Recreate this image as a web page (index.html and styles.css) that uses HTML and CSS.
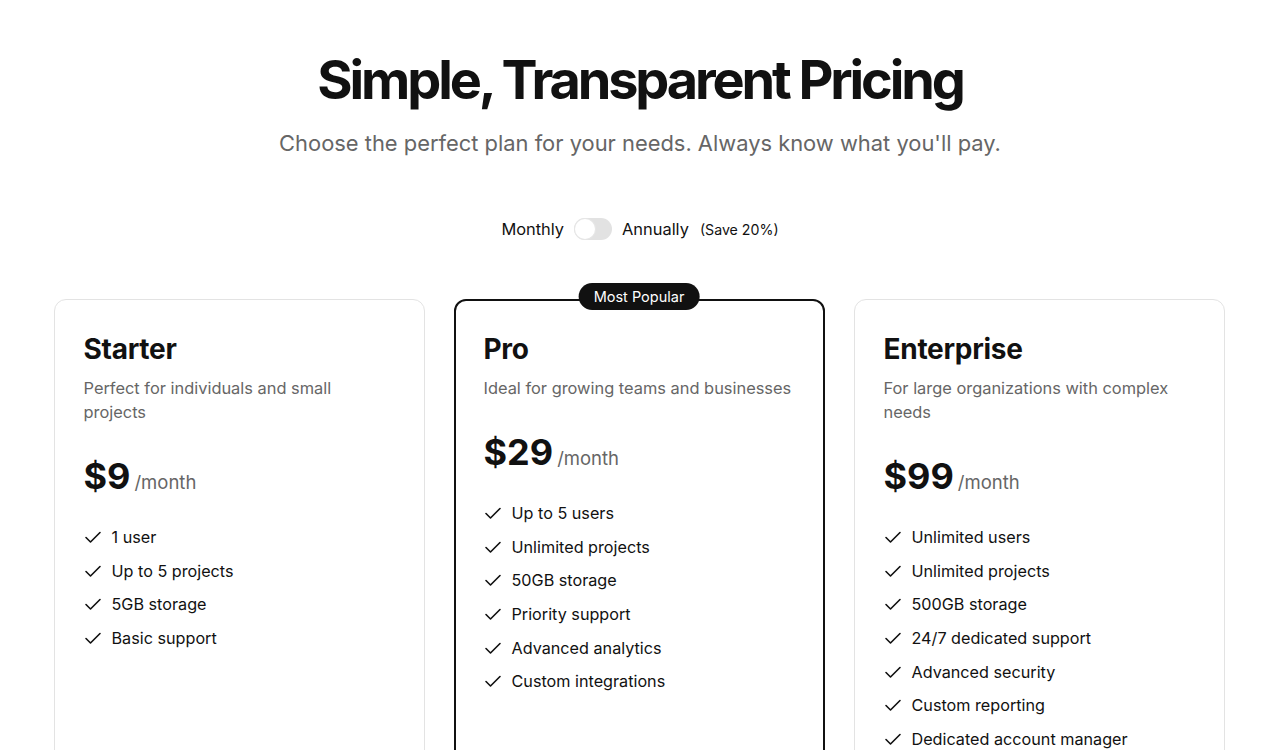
FILE: index.html
```html
<!DOCTYPE html>
<html lang="en">
<head>
    <meta charset="UTF-8">
    <meta name="viewport" content="width=device-width, initial-scale=1.0">
    <title>Pricing</title>
    <link rel="stylesheet" href="styles.css">
</head>
<body>

    <!-- Header -->
    <div class="hero">
        <h1>Simple, Transparent Pricing</h1>
        <p>Choose the perfect plan for your needs. Always know what you'll pay.</p>
    </div>

    <!-- Billing toggle -->
    <div class="billing">
        <span>Monthly</span>
        <span class="switch"><span class="knob"></span></span>
        <span>Annually</span>
        <span class="save">(Save 20%)</span>
    </div>

    <!-- Plans -->
    <div class="plans">
        <div class="plan">
            <h2>Starter</h2>
            <p class="desc">Perfect for individuals and small projects</p>
            <div class="price"><strong>$9</strong> <span>/month</span></div>
            <ul class="features">
                <li><svg viewBox="0 0 18 18"><path d="M2 9.5l4.5 4.5L16 4.5"/></svg>1 user</li>
                <li><svg viewBox="0 0 18 18"><path d="M2 9.5l4.5 4.5L16 4.5"/></svg>Up to 5 projects</li>
                <li><svg viewBox="0 0 18 18"><path d="M2 9.5l4.5 4.5L16 4.5"/></svg>5GB storage</li>
                <li><svg viewBox="0 0 18 18"><path d="M2 9.5l4.5 4.5L16 4.5"/></svg>Basic support</li>
            </ul>
        </div>

        <div class="plan popular">
            <span class="badge">Most Popular</span>
            <h2>Pro</h2>
            <p class="desc">Ideal for growing teams and businesses</p>
            <div class="price"><strong>$29</strong> <span>/month</span></div>
            <ul class="features">
                <li><svg viewBox="0 0 18 18"><path d="M2 9.5l4.5 4.5L16 4.5"/></svg>Up to 5 users</li>
                <li><svg viewBox="0 0 18 18"><path d="M2 9.5l4.5 4.5L16 4.5"/></svg>Unlimited projects</li>
                <li><svg viewBox="0 0 18 18"><path d="M2 9.5l4.5 4.5L16 4.5"/></svg>50GB storage</li>
                <li><svg viewBox="0 0 18 18"><path d="M2 9.5l4.5 4.5L16 4.5"/></svg>Priority support</li>
                <li><svg viewBox="0 0 18 18"><path d="M2 9.5l4.5 4.5L16 4.5"/></svg>Advanced analytics</li>
                <li><svg viewBox="0 0 18 18"><path d="M2 9.5l4.5 4.5L16 4.5"/></svg>Custom integrations</li>
            </ul>
        </div>

        <div class="plan">
            <h2>Enterprise</h2>
            <p class="desc">For large organizations with complex needs</p>
            <div class="price"><strong>$99</strong> <span>/month</span></div>
            <ul class="features">
                <li><svg viewBox="0 0 18 18"><path d="M2 9.5l4.5 4.5L16 4.5"/></svg>Unlimited users</li>
                <li><svg viewBox="0 0 18 18"><path d="M2 9.5l4.5 4.5L16 4.5"/></svg>Unlimited projects</li>
                <li><svg viewBox="0 0 18 18"><path d="M2 9.5l4.5 4.5L16 4.5"/></svg>500GB storage</li>
                <li><svg viewBox="0 0 18 18"><path d="M2 9.5l4.5 4.5L16 4.5"/></svg>24/7 dedicated support</li>
                <li><svg viewBox="0 0 18 18"><path d="M2 9.5l4.5 4.5L16 4.5"/></svg>Advanced security</li>
                <li><svg viewBox="0 0 18 18"><path d="M2 9.5l4.5 4.5L16 4.5"/></svg>Custom reporting</li>
                <li><svg viewBox="0 0 18 18"><path d="M2 9.5l4.5 4.5L16 4.5"/></svg>Dedicated account manager</li>
            </ul>
        </div>
    </div>

</body>
</html>
```

FILE: styles.css
```css
/* Pricing page */
body { font-family: Inter, "Noto Sans", sans-serif; margin: 0; background: #fff; color: #111; }
.hero { text-align: center; padding-top: 48px; }
.hero h1 { margin: 0; font-size: 54px; line-height: 64px; font-weight: 700; letter-spacing: -0.058em; }
.hero p { margin: 16px 0 0; font-size: 21.9px; line-height: 30px; color: #666; }
.billing { display: flex; align-items: center; justify-content: center; gap: 10px; margin-top: 60px; font-size: 16.4px; }
.switch { display: inline-block; width: 38px; height: 22px; border-radius: 11px; background: #e2e2e2; position: relative; }
.knob { position: absolute; left: 1px; top: 1px; width: 20px; height: 20px; border-radius: 50%; background: #fff; box-shadow: 0 0 0 1px #e6e6e6; }
.save { font-size: 14.2px; margin-left: 1px; }
.plans { display: grid; grid-template-columns: repeat(3, 371px); gap: 29px; justify-content: center; margin-top: 59px; padding-right: 2px; }
.plan { position: relative; border: 1px solid #e3e3e3; border-radius: 12px; padding: 32px 29px 40px; min-height: 500px; }
.plan.popular { border: 2px solid #111; padding: 31px 28px 39px; }
.badge { position: absolute; top: -18px; left: 50%; transform: translateX(-50%); background: #111; color: #fff; font-size: 14.5px; line-height: 27px; padding: 0 15px; border-radius: 14px; white-space: nowrap; }
.plan h2 { margin: 0; font-size: 28px; line-height: 34px; font-weight: 700; letter-spacing: -0.01em; }
.desc { margin: 10px 0 0; font-size: 16.4px; line-height: 24px; color: #666; }
.price { margin-top: 30px; display: flex; align-items: baseline; gap: 4px; }
.price strong { font-size: 36px; line-height: 44px; font-weight: 700; }
.price span { font-size: 18.5px; color: #666; }
.features { list-style: none; margin: 27px 0 0; padding: 0; }
.features li { display: flex; align-items: center; gap: 10px; font-size: 16.2px; line-height: 24px; margin-bottom: 9.7px; }
.features svg { width: 18px; height: 18px; flex: none; fill: none; stroke: #111; stroke-width: 1.6; stroke-linecap: round; stroke-linejoin: round; }
```
